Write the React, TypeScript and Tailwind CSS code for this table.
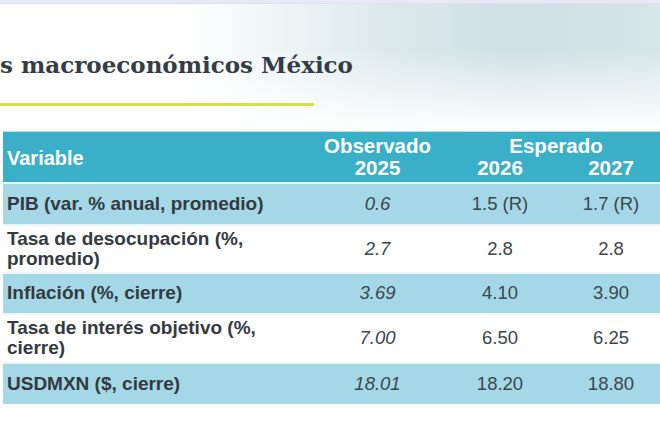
import React from "react";

const rows: { label: string; v: [string, string, string]; shade: boolean; h: number }[] = [
  { label: "PIB (var. % anual, promedio)", v: ["0.6", "1.5 (R)", "1.7 (R)"], shade: true, h: 42 },
  { label: "Tasa de desocupación (%, promedio)", v: ["2.7", "2.8", "2.8"], shade: false, h: 48 },
  { label: "Inflación (%, cierre)", v: ["3.69", "4.10", "3.90"], shade: true, h: 41 },
  { label: "Tasa de interés objetivo (%, cierre)", v: ["7.00", "6.50", "6.25"], shade: false, h: 49 },
  { label: "USDMXN ($, cierre)", v: ["18.01", "18.20", "18.80"], shade: true, h: 41 },
];

export default function App() {
  return (
    <div className="w-[660px] h-[435px] overflow-hidden bg-white relative" style={{ fontFamily: '"Liberation Sans", Arial, sans-serif' }}>
      <div className="h-[4px] bg-[#e8e9f7] border-b border-[#dfe0ee]" />
      <div className="h-[127px] bg-[linear-gradient(to_bottom,rgba(255,255,255,0)_35%,#ffffff_100%),linear-gradient(to_right,#ffffff_28%,#dce9ec_58%,#cde0e5_78%,#d5e6e9_100%)] pt-[46px]">
        <h1
          className="text-[23px] leading-[30px] font-bold text-[#353c45] whitespace-nowrap"
          style={{ fontFamily: '"DejaVu Serif", Georgia, serif' }}
        >
          s macroeconómicos México
        </h1>
        <div className="mt-[23px] h-[3px] w-[314px] bg-[#d3e04a]" />
      </div>
      <div className="pl-[3px]">
        <table className="border-collapse table-fixed w-[664px]">
          <colgroup>
            <col className="w-[307px]" />
            <col className="w-[135px]" />
            <col className="w-[110px]" />
            <col className="w-[112px]" />
          </colgroup>
          <thead>
            <tr className="bg-[#3aafc8] text-white font-bold text-[20.5px] leading-[22px] h-[51px] border-t border-[#b3e0ea]">
              <th className="text-left pl-[4px] align-middle pt-[2px] text-[20px]">Variable</th>
              <th className="text-center align-middle">
                <div>Observado</div>
                <div>2025</div>
              </th>
              <th colSpan={2} className="align-middle p-0">
                <div className="text-center">Esperado</div>
                <div className="flex">
                  <div className="w-[110px] text-center">2026</div>
                  <div className="w-[112px] text-center">2027</div>
                </div>
              </th>
            </tr>
          </thead>
          <tbody>
            {rows.map((r, i) => (
              <tr
                key={i}
                className={`${r.shade ? "bg-[#a5d8e6]" : "bg-white"} border-t-2 border-[#e9f6fa]`}
                style={{ height: r.h }}
              >
                <td className="pl-[4px] pr-[20px] text-[19px] leading-[20px] font-bold text-[#343a3f] align-middle">{r.label}</td>
                <td className="text-center text-[18.5px] italic text-[#3b464d] align-middle">{r.v[0]}</td>
                <td className="text-center text-[18.5px] text-[#3b464d] align-middle">{r.v[1]}</td>
                <td className="text-center text-[18.5px] text-[#3b464d] align-middle">{r.v[2]}</td>
              </tr>
            ))}
          </tbody>
        </table>
      </div>
    </div>
  );
}
